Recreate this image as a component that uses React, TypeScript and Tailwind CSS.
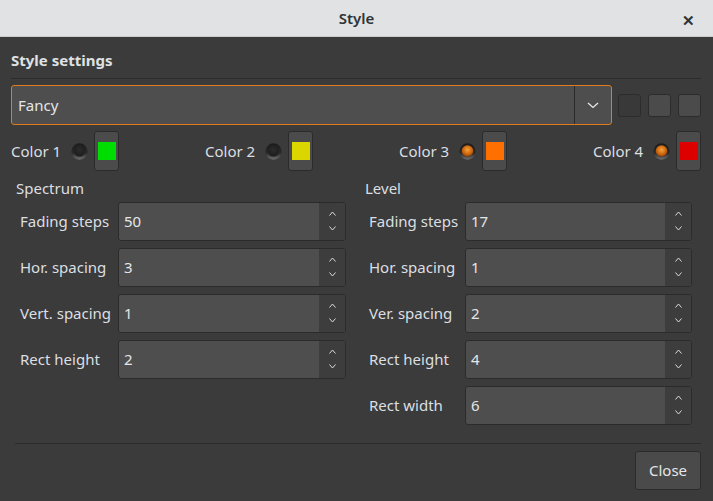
const font = { fontFamily: '"Noto Sans", "Open Sans", sans-serif' };

function Led({ on }: { on: boolean }) {
  const id = on ? 'ledOn' : 'ledOff';
  return (
    <svg width="17" height="17" viewBox="0 0 17 17">
      <defs>
        <radialGradient id={id + 'b'} cx="50%" cy="40%" r="60%">
          {on ? (
            <>
              <stop offset="0%" stopColor="#f5a23a" />
              <stop offset="70%" stopColor="#c8600a" />
              <stop offset="100%" stopColor="#7a3a05" />
            </>
          ) : (
            <>
              <stop offset="0%" stopColor="#2c2c2c" />
              <stop offset="100%" stopColor="#1c1c1c" />
            </>
          )}
        </radialGradient>
        <linearGradient id={id + 'r'} x1="0" y1="0" x2="0" y2="1">
          <stop offset="0%" stopColor="#1c1c1c" />
          <stop offset="60%" stopColor="#2a2a2a" />
          <stop offset="100%" stopColor="#707070" />
        </linearGradient>
      </defs>
      <circle cx="8.5" cy="8.5" r="8.2" fill={`url(#${id}r)`} />
      <circle cx="8.5" cy="8" r={on ? 5.8 : 5.5} fill={`url(#${id}b)`} />
    </svg>
  );
}

function ColorPick({ label, color, on }: { label: string; color: string; on: boolean }) {
  return (
    <div className="flex items-center">
      <span className="text-[15px] text-[#dcdfe2] w-[60px] whitespace-nowrap">{label}</span>
      <Led on={on} />
      <div className="ml-[6px] w-[25px] h-[40px] rounded-[3px] border border-[#2b2b2b] bg-[#4b4b4b] flex items-center justify-center">
        <div className={`w-[18px] h-[18px] ${color}`} />
      </div>
    </div>
  );
}

function Chevron({ up }: { up?: boolean }) {
  return (
    <svg width="9" height="5" viewBox="0 0 9 5">
      <path
        d={up ? 'M1.5 4.5 L4.5 1 L7.5 4.5' : 'M1.5 0.5 L4.5 4 L7.5 0.5'}
        fill="none"
        stroke="#d8dadc"
        strokeWidth="1"
      />
    </svg>
  );
}

function SpinRow({ label, value, labelW }: { label: string; value: string; labelW: string }) {
  return (
    <div className="flex items-center">
      <span className={`${labelW} text-[15px] text-[#dcdfe2] whitespace-nowrap`}>{label}</span>
      <div className="flex-1 h-[39px] flex rounded-[3px] border border-[#2b2b2b] bg-[#4e4e4e] overflow-hidden">
        <div className="flex-1 flex items-center pl-[5px] text-[15px] text-[#e4e6e8]">{value}</div>
        <div className="w-[26px] bg-[#3d3d3d] flex flex-col items-center justify-between pt-[8px] pb-[9px]">
          <Chevron up />
          <Chevron />
        </div>
      </div>
    </div>
  );
}

export default function App() {
  const spectrum = [
    ['Fading steps', '50'],
    ['Hor. spacing', '3'],
    ['Vert. spacing', '1'],
    ['Rect height', '2'],
  ];
  const level = [
    ['Fading steps', '17'],
    ['Hor. spacing', '1'],
    ['Ver. spacing', '2'],
    ['Rect height', '4'],
    ['Rect width', '6'],
  ];

  return (
    <div className="w-[713px] h-[501px] bg-[#3b3b3b] flex flex-col" style={font}>
      {/* title bar */}
      <div className="h-[37px] bg-[#e1e2e4] border-b border-[#c9cacc] flex items-center relative">
        <span className="flex-1 text-center text-[15px] font-semibold text-[#2e3436]">Style</span>
        <span className="absolute right-[18px] top-[9px] text-[15px] font-bold text-[#2e3436]">✕</span>
      </div>

      <div className="flex-1 flex flex-col pl-[11px] pr-[12px]">
        <div className="mt-[13px] text-[15px] leading-[20px] font-bold text-[#dfe1e3]">Style settings</div>
        <div className="mt-[8px] h-px bg-[#2c2c2c]" />

        {/* preset combo + small buttons */}
        <div className="mt-[6px] flex items-center">
          <div className="w-[601px] h-[40px] flex rounded-[3px] border border-[#e07b1e] bg-[#4e4e4e]">
            <div className="flex-1 flex items-center pl-[6px] text-[15px] text-[#e4e6e8]">Fancy</div>
            <div className="w-[37px] border-l border-[#2a2a2a] flex items-center justify-center">
              <svg width="12" height="7" viewBox="0 0 12 7">
                <path d="M1 1 L6 5.5 L11 1" fill="none" stroke="#e8e8e8" strokeWidth="1.3" />
              </svg>
            </div>
          </div>
          <div className="ml-[6px] w-[23px] h-[23px] rounded-[3px] border border-[#2c2c2c] bg-[#393939]" />
          <div className="ml-[7px] w-[23px] h-[23px] rounded-[3px] border border-[#2c2c2c] bg-[#4b4b4b]" />
          <div className="ml-[7px] w-[23px] h-[23px] rounded-[3px] border border-[#2c2c2c] bg-[#4b4b4b]" />
        </div>

        {/* colors */}
        <div className="mt-[6px] flex justify-between">
          <ColorPick label="Color 1" color="bg-[#00dd00]" on={false} />
          <ColorPick label="Color 2" color="bg-[#dbd600]" on={false} />
          <ColorPick label="Color 3" color="bg-[#ff7000]" on />
          <ColorPick label="Color 4" color="bg-[#dd0000]" on />
        </div>

        {/* groups */}
        <div className="mt-[7px] grid grid-cols-[344px_1fr] gap-[5px]">
          <div className="pr-[9px]">
            <div className="pl-[5px] text-[15px] leading-[20px] text-[#dcdfe2]">Spectrum</div>
            <div className="mt-[4px] pl-[9px] flex flex-col gap-[7px]">
              {spectrum.map(([l, v]) => (
                <SpinRow key={l} label={l} value={v} labelW="w-[98px]" />
              ))}
            </div>
          </div>
          <div className="pr-[9px]">
            <div className="pl-[5px] text-[15px] leading-[20px] text-[#dcdfe2]">Level</div>
            <div className="mt-[4px] pl-[9px] flex flex-col gap-[7px]">
              {level.map(([l, v]) => (
                <SpinRow key={l} label={l} value={v} labelW="w-[96px]" />
              ))}
            </div>
          </div>
        </div>

        <div className="mt-[18px] ml-[4px] h-px bg-[#2c2c2c]" />

        <div className="mt-[7px] flex justify-end">
          <button className="w-[66px] h-[39px] rounded-[3px] border border-[#2b2b2b] bg-[#4a4a4a] text-[15px] text-[#e4e6e8]">
            Close
          </button>
        </div>
      </div>
    </div>
  );
}
